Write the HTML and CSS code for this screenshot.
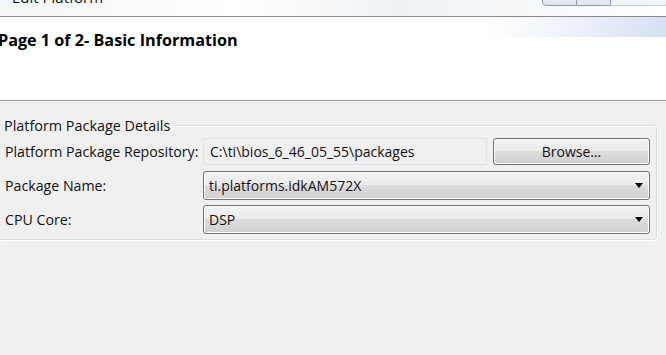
FILE: index.html
```html
<!DOCTYPE html>
<html lang="en">
<head>
  <meta charset="UTF-8">
  <title>Edit Platform</title>
  <link rel="stylesheet" href="styles.css">
</head>
<body>
  <div class="window">
    <div class="titlebar">
      <div class="title">
        <span class="app-icon"></span>
        <span class="title-text">Edit Platform</span>
      </div>
      <div class="caption-buttons">
        <div class="cap-btn cap-min"><span></span></div>
        <div class="cap-btn cap-max"><span></span></div>
        <div class="cap-btn cap-close">&#x2715;</div>
      </div>
    </div>

    <div class="wizard-header">
      <h1>Page 1 of 2- Basic Information</h1>
    </div>

    <div class="wizard-body">
      <fieldset class="group">
        <legend>Platform Package Details</legend>

        <div class="row">
          <label class="row-label">Platform Package Repository:</label>
          <div class="field readonly">C:\ti\bios_6_46_05_55\packages</div>
          <button class="btn">Browse...</button>
        </div>

        <div class="row">
          <label class="row-label">Package Name:</label>
          <div class="combo">
            <span>ti.platforms.idkAM572X</span>
            <span class="arrow"></span>
          </div>
        </div>

        <div class="row">
          <label class="row-label">CPU Core:</label>
          <div class="combo">
            <span>DSP</span>
            <span class="arrow"></span>
          </div>
        </div>
      </fieldset>
    </div>
  </div>
</body>
</html>
```

FILE: styles.css
```css
html, body {
  margin: 0;
  padding: 0;
  overflow: hidden;
}
body {
  width: 666px;
  height: 355px;
  font-family: "Open Sans", "Noto Sans", sans-serif;
  font-size: 14px;
  color: #111;
  background: #f0f0f0;
}
.window {
  display: flex;
  flex-direction: column;
  height: 355px;
}

/* title bar, mostly scrolled off the top */
.titlebar {
  height: 16px;
  border-bottom: 1px solid #8a8a8a;
  background: linear-gradient(90deg, #f4f6f8 0%, #ffffff 35%, #eef2f5 60%, #ffffff 100%);
  display: flex;
  justify-content: space-between;
  overflow: hidden;
}
.title {
  display: flex;
  align-items: flex-end;
  gap: 6px;
  margin-top: -13px;
  height: 20px;
}
.app-icon {
  width: 6px;
  height: 8px;
  margin-bottom: 10px;
  border-radius: 0 4px 4px 0;
  background: #9a9a9a;
}
.title-text {
  font-size: 15px;
  line-height: 20px;
  color: #111;
}
.caption-buttons {
  display: flex;
  margin-top: -15px;
  margin-right: -2px;
  height: 20px;
}
.cap-btn {
  width: 33px;
  height: 19px;
  border: 1px solid #8d9aa8;
  border-left: none;
  background: linear-gradient(#f4f7fa, #dfe6ee);
  display: flex;
  align-items: flex-end;
  justify-content: center;
}
.cap-min {
  border-left: 1px solid #8d9aa8;
  border-radius: 0 0 0 4px;
}
.cap-min span {
  width: 10px;
  height: 2px;
  margin-bottom: 15px;
  background: #6a7580;
}
.cap-max span {
  width: 12px;
  height: 2px;
  margin-bottom: 15px;
  background: #333;
}
.cap-close {
  width: 56px;
  border-radius: 0 0 4px 0;
  border-color: #c8d0d8;
  background: linear-gradient(#fbfcfd, #f0f3f6);
  font-size: 11px;
  line-height: 20px;
  color: #555;
  align-items: center;
  margin-top: -6px;
  height: 25px;
}

/* wizard header */
.wizard-header {
  height: 83px;
  background: #fff;
  border-bottom: 1px solid #a0a0a0;
  position: relative;
  overflow: hidden;
}
.wizard-header::after {
  content: "";
  position: absolute;
  right: 0;
  top: 0;
  width: 180px;
  height: 20px;
  background: linear-gradient(90deg, rgba(255,255,255,0) 0%, #e8eef8 60%, #d6e0f0 100%);
  border-radius: 40px 0 0 40px;
}
.wizard-header h1 {
  margin: 13px 0 0 -2px;
  font-size: 16.2px;
  font-weight: bold;
  line-height: 20px;
  color: #000;
}

/* body */
.wizard-body {
  flex: 1;
  padding: 15px 9px 0 0;
  background: #f0f0f0;
}
.group {
  margin: 0 0 0 -2px;
  padding: 3px 6px 6px 6px;
  border: 1px solid #d5dfe5;
  border-radius: 3px;
  box-shadow: inset 1px 1px 0 #fff, 1px 1px 0 #fff;
  display: flex;
  flex-direction: column;
  gap: 6px;
}
.group legend {
  padding: 0 2px 0 1px;
  margin-left: -2px;
  font-size: 14.4px;
  line-height: 19px;
}
.row {
  display: flex;
  align-items: center;
  gap: 5px;
  height: 27px;
}
.row + .row {
  height: 28px;
}
.row-label {
  width: 193px;
  flex-shrink: 0;
  white-space: nowrap;
  font-size: 14.2px;
}
.field {
  flex: 1;
  height: 25px;
  line-height: 25px;
  padding: 0 6px;
  border: 1px solid #e2e3ea;
  background: #f0f0f0;
  margin-right: 1px;
}
.btn {
  width: 157px;
  height: 27px;
  font-family: inherit;
  font-size: 14px;
  color: #111;
  border: 1px solid #707070;
  border-radius: 3px;
  background: linear-gradient(#f2f2f2 0%, #ebebeb 49%, #dddddd 50%, #cfcfcf 100%);
  box-shadow: inset 0 0 0 1px #fcfcfc;
  padding: 0;
}
.combo {
  flex: 1;
  height: 27px;
  display: flex;
  align-items: center;
  justify-content: space-between;
  padding: 0 5px 0 5px;
  border: 1px solid #707070;
  border-radius: 3px;
  background: linear-gradient(#f2f2f2 0%, #ebebeb 49%, #dddddd 50%, #cfcfcf 100%);
  box-shadow: inset 0 0 0 1px #fcfcfc;
}
.arrow {
  width: 0;
  height: 0;
  margin-right: 1px;
  border-left: 4px solid transparent;
  border-right: 4px solid transparent;
  border-top: 5px solid #000;
}
```
